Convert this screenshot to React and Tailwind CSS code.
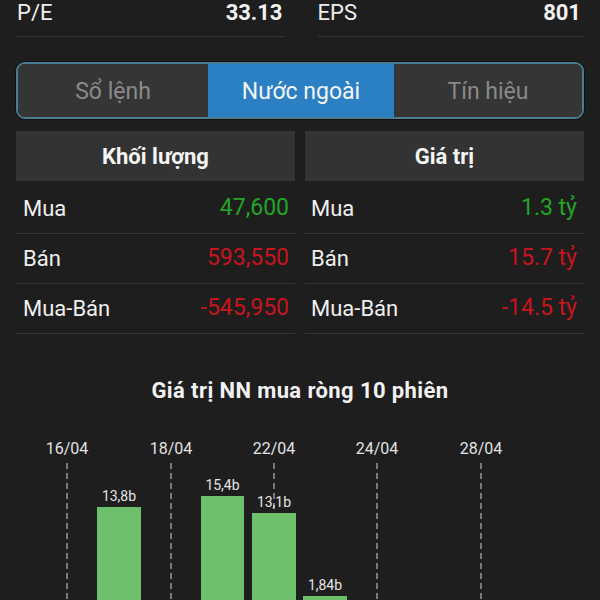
import React from "react";

const rowsLeft = [
  { label: "Mua", value: "47,600", color: "text-[#22a524]" },
  { label: "Bán", value: "593,550", color: "text-[#c8151d]" },
  { label: "Mua-Bán", value: "-545,950", color: "text-[#c8151d]" },
];
const rowsRight = [
  { label: "Mua", value: "1.3 tỷ", color: "text-[#22a524]" },
  { label: "Bán", value: "15.7 tỷ", color: "text-[#c8151d]" },
  { label: "Mua-Bán", value: "-14.5 tỷ", color: "text-[#c8151d]" },
];

function Table({ title, rows, padL, padR }) {
  return (
    <div className="flex-1 flex flex-col">
      <div className="h-[50px] bg-[#333333] flex items-center justify-center text-[22px] font-bold text-[#f5f5f5]">
        {title}
      </div>
      <div className="mt-[3px] flex flex-col">
        {rows.map((r) => (
          <div
            key={r.label}
            className={`h-[50px] box-border border-b border-[#363636] flex items-center justify-between ${padL} ${padR}`}
          >
            <span className="text-[22px] text-[#efefef]">{r.label}</span>
            <span className={`text-[23px] ${r.color}`}>{r.value}</span>
          </div>
        ))}
      </div>
    </div>
  );
}

const dates = [
  { x: 67, t: "16/04" },
  { x: 171, t: "18/04" },
  { x: 274, t: "22/04" },
  { x: 377, t: "24/04" },
  { x: 481, t: "28/04" },
];
const bars = [
  { x: 97, y: 507, w: 44, label: "13,8b", ly: 501 },
  { x: 201, y: 496, w: 43, label: "15,4b", ly: 490 },
  { x: 252, y: 513, w: 44, label: "13,1b", ly: 507 },
  { x: 303, y: 596, w: 44, label: "1,84b", ly: 590 },
];

export default function App() {
  return (
    <div className="w-[600px] h-[600px] overflow-hidden bg-[#1e1e1e] text-white font-['Roboto','Liberation_Sans',sans-serif]">
      {/* stats row */}
      <div className="flex px-4 gap-[34px]">
        <div className="flex-1 h-[37px] box-border border-b border-[#363636] flex justify-between items-start text-[22px] leading-[26px] pl-px">
          <span className="text-[#eeeeee]">P/E</span>
          <span className="font-bold text-[#f2f2f2] pr-px">33.13</span>
        </div>
        <div className="flex-1 h-[37px] box-border border-b border-[#363636] flex justify-between items-start text-[22px] leading-[26px]">
          <span className="text-[#eeeeee]">EPS</span>
          <span className="font-bold text-[#f2f2f2] pr-[3px]">801</span>
        </div>
      </div>

      {/* tabs */}
      <div className="mt-[25px] mx-4 h-[57px] box-border border-2 border-[#4a7d93] rounded-[9px] overflow-hidden flex text-[23px] shadow-[0_0_0_1px_#121212]">
        <div className="w-[190px] bg-[#353535] flex items-center justify-center pt-[3px] text-[#8a8a8a]">Sổ lệnh</div>
        <div className="w-[186px] bg-[#2a80c2] flex items-center justify-center pt-[3px] text-[#f4f4f4]">Nước ngoài</div>
        <div className="flex-1 bg-[#353535] flex items-center justify-center pt-[3px] text-[#8a8a8a]">Tín hiệu</div>
      </div>

      {/* tables */}
      <div className="mt-3 mx-4 flex gap-[10px]">
        <Table title="Khối lượng" rows={rowsLeft} padL="pl-[7px]" padR="pr-[6px]" />
        <Table title="Giá trị" rows={rowsRight} padL="pl-[6px]" padR="pr-[7px]" />
      </div>

      {/* chart title */}
      <div className="mt-[45px] text-center text-[22px] leading-[24px] font-bold tracking-[0.4px] text-[#f2f2f2]">
        Giá trị NN mua ròng 10 phiên
      </div>

      {/* chart */}
      <svg width="600" height="197" viewBox="0 403 600 197" className="block">
        {dates.map((d) => (
          <g key={d.t}>
            <text
              x={d.x}
              y={454}
              textAnchor="middle"
              fontSize="16"
              fill="#e2e2e2"
              fontFamily="Roboto, sans-serif"
            >
              {d.t}
            </text>
            <line
              x1={d.x}
              x2={d.x}
              y1={463}
              y2={600}
              stroke="#7a7a7a"
              strokeWidth="2"
              strokeDasharray="6 4"
            />
          </g>
        ))}
        {bars.map((b) => (
          <g key={b.label}>
            <rect x={b.x} y={b.y} width={b.w} height={600 - b.y} fill="#6cbf6b" />
            <text
              x={b.x + b.w / 2}
              y={b.ly}
              textAnchor="middle"
              fontSize="14"
              fill="#e4e4e4"
              fontFamily="Roboto, sans-serif"
            >
              {b.label}
            </text>
          </g>
        ))}
      </svg>
    </div>
  );
}
